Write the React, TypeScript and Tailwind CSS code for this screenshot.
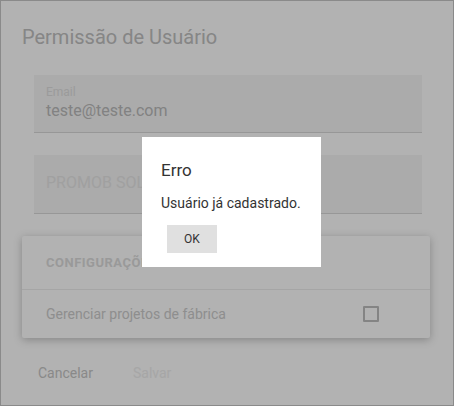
import React from "react";

export default function App() {
  return (
    <div className="w-[455px] h-[407px] bg-white font-['Roboto',sans-serif]">
      <div className="relative w-[454px] h-[406px] border border-[#8a8a8a] bg-white overflow-hidden">
        <div className="flex flex-col pl-[21px] pr-[23px] pt-[24px]">
          <h1 className="text-[20px] leading-[24px] text-[#c0c0c0]">Permissão de Usuário</h1>

          <div className="mt-[26px] ml-[12px] w-[388px] h-[58px] bg-[#f5f5f5] border-b border-[#d8d8d8] px-[12px] pt-[10px]">
            <div className="text-[12px] leading-[14px] text-[#dedede]">Email</div>
            <div className="text-[16px] leading-[20px] mt-[2px] text-[#bababa]">teste@teste.com</div>
          </div>

          <div className="mt-[22px] ml-[12px] w-[388px] h-[59px] bg-[#f5f5f5] border-b border-[#d8d8d8] px-[12px] pt-[18px]">
            <div className="text-[16px] leading-[20px] text-[#e5e5e5]">PROMOB SOLUTIONS</div>
          </div>

          <div className="mt-[22px] w-[408px] bg-white shadow-[0_2px_8px_rgba(0,0,0,0.25)] rounded-[2px]">
            <div className="h-[54px] flex items-center px-[24px] border-b border-[#ececec]">
              <span className="text-[13px] font-bold tracking-[0.5px] text-[#dcdcdc]">CONFIGURAÇÕES</span>
            </div>
            <div className="h-[48px] flex items-center justify-between pl-[24px] pr-[51px]">
              <span className="text-[14px] text-[#cccccc]">Gerenciar projetos de fábrica</span>
              <span className="w-[16px] h-[16px] border-2 border-[#bebebe] rounded-[1px]" />
            </div>
          </div>

          <div className="mt-[25px] flex items-center gap-[40px] pl-[16px]">
            <span className="text-[14px] text-[#c5c5c5]">Cancelar</span>
            <span className="text-[14px] text-[#eeeeee]">Salvar</span>
          </div>
        </div>

        <div className="absolute inset-0 bg-black/30" />

        <div className="absolute left-[141px] top-[136px] w-[179px] h-[130px] bg-white flex flex-col px-[19px] pt-[22px]">
          <div className="text-[17px] leading-[22px] text-[#333333]">Erro</div>
          <div className="mt-[13px] text-[14px] leading-[18px] text-[#333333]">Usuário já cadastrado.</div>
          <button className="mt-[13px] ml-[6px] w-[50px] h-[28px] bg-[#e0e0e0] text-[12px] text-[#333333]">OK</button>
        </div>
      </div>
    </div>
  );
}
